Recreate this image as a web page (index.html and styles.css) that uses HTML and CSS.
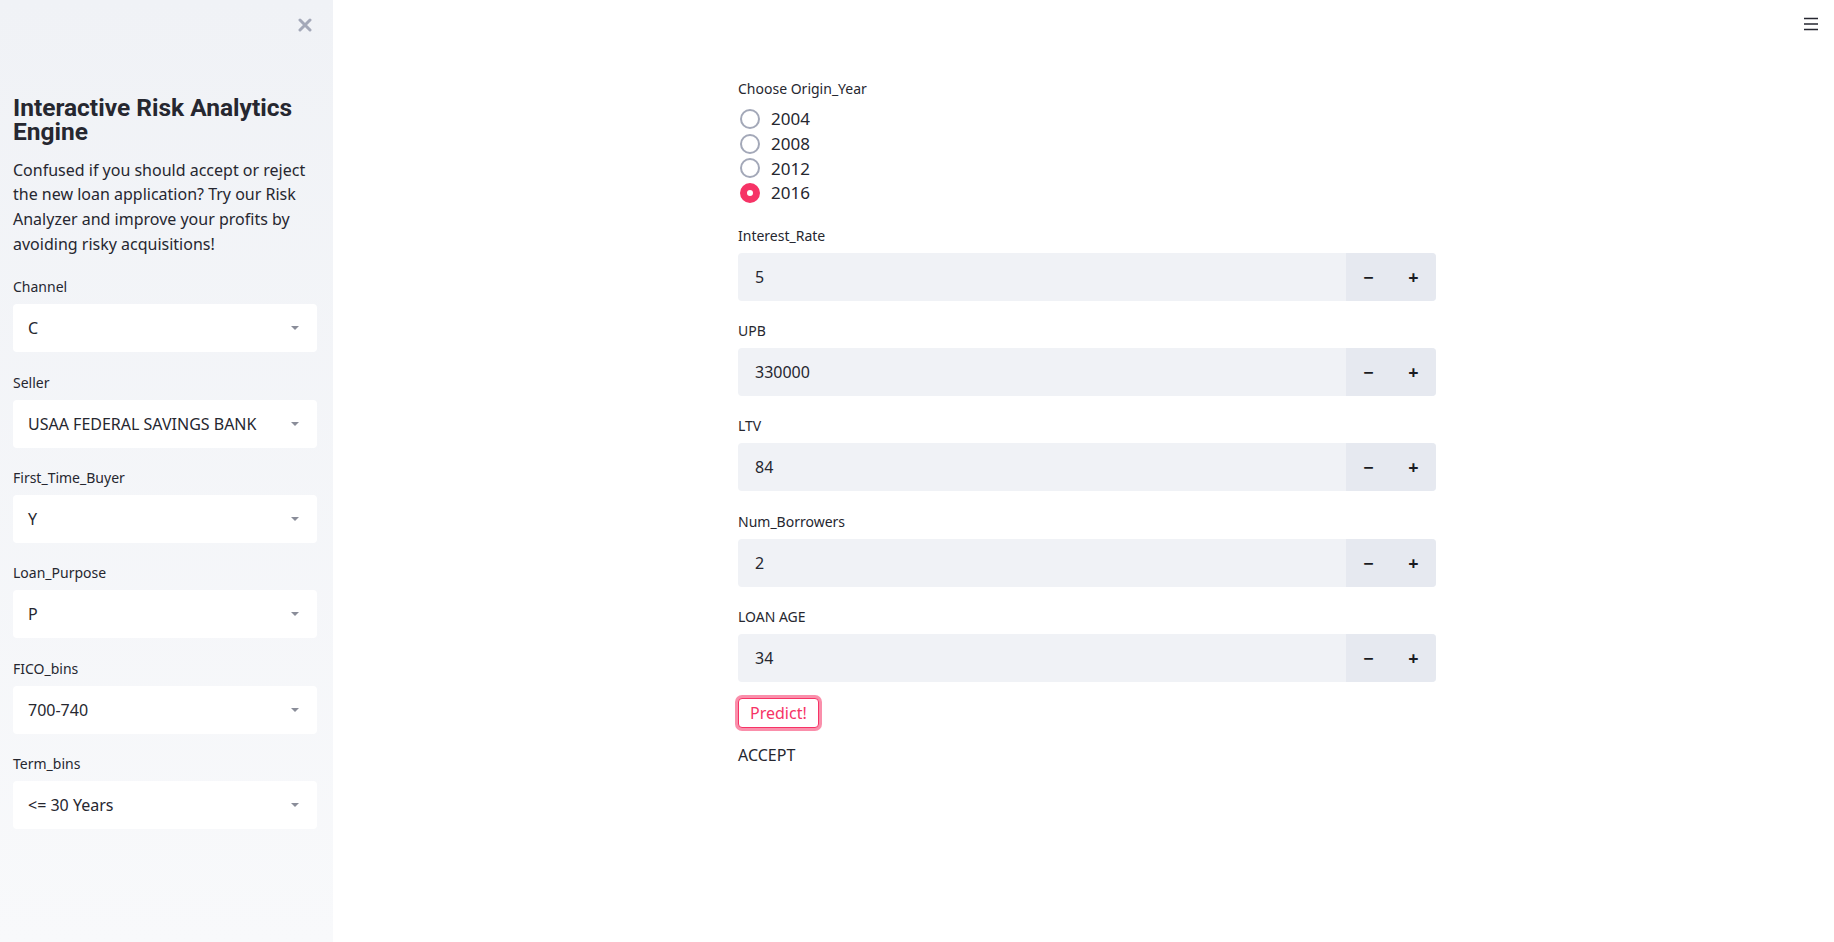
FILE: index.html
```html
<!DOCTYPE html>
<html lang="en">
<head>
<meta charset="utf-8">
<title>Interactive Risk Analytics Engine</title>
<link rel="stylesheet" href="styles.css">
</head>
<body>
<div class="app">
  <aside class="sidebar">
    <button class="close" aria-label="Close sidebar">
      <svg width="14" height="14" viewBox="0 0 14 14"><path d="M2 2 L12 12 M12 2 L2 12" stroke="#a3a8b8" stroke-width="3" stroke-linecap="round"/></svg>
    </button>
    <h2 class="title">Interactive Risk Analytics Engine</h2>
    <p class="intro">Confused if you should accept or reject the new loan application? Try our Risk Analyzer and improve your profits by avoiding risky acquisitions!</p>
    <div class="field">
      <div class="label">Channel</div>
      <div class="select"><span>C</span><span class="caret"></span></div>
    </div>
    <div class="field">
      <div class="label">Seller</div>
      <div class="select"><span>USAA FEDERAL SAVINGS BANK</span><span class="caret"></span></div>
    </div>
    <div class="field">
      <div class="label">First_Time_Buyer</div>
      <div class="select"><span>Y</span><span class="caret"></span></div>
    </div>
    <div class="field">
      <div class="label">Loan_Purpose</div>
      <div class="select"><span>P</span><span class="caret"></span></div>
    </div>
    <div class="field">
      <div class="label">FICO_bins</div>
      <div class="select"><span>700-740</span><span class="caret"></span></div>
    </div>
    <div class="field">
      <div class="label">Term_bins</div>
      <div class="select"><span>&lt;= 30 Years</span><span class="caret"></span></div>
    </div>
  </aside>
  <main class="main">
    <button class="menu" aria-label="Menu">
      <svg width="16" height="14" viewBox="0 0 16 14"><path d="M1 1.5 H15 M1 7 H15 M1 12.5 H15" stroke="#262730" stroke-width="1.5"/></svg>
    </button>
    <div class="content">
      <div class="label">Choose Origin_Year</div>
      <div class="radios">
        <div class="radio"><span class="dot"></span><span>2004</span></div>
        <div class="radio"><span class="dot"></span><span>2008</span></div>
        <div class="radio"><span class="dot"></span><span>2012</span></div>
        <div class="radio"><span class="dot on"></span><span>2016</span></div>
      </div>
      <div class="field">
        <div class="label">Interest_Rate</div>
        <div class="number"><span class="val">5</span><span class="step">&minus;</span><span class="step">+</span></div>
      </div>
      <div class="field">
        <div class="label">UPB</div>
        <div class="number"><span class="val">330000</span><span class="step">&minus;</span><span class="step">+</span></div>
      </div>
      <div class="field">
        <div class="label">LTV</div>
        <div class="number"><span class="val">84</span><span class="step">&minus;</span><span class="step">+</span></div>
      </div>
      <div class="field">
        <div class="label">Num_Borrowers</div>
        <div class="number"><span class="val">2</span><span class="step">&minus;</span><span class="step">+</span></div>
      </div>
      <div class="field">
        <div class="label">LOAN AGE</div>
        <div class="number"><span class="val">34</span><span class="step">&minus;</span><span class="step">+</span></div>
      </div>
      <button class="predict">Predict!</button>
      <div class="result">ACCEPT</div>
    </div>
  </main>
</div>
</body>
</html>
```
FILE: styles.css
```css
* { box-sizing: border-box; }
html, body { margin: 0; padding: 0; }
body {
  font-family: "Noto Sans", "Open Sans", sans-serif;
  color: #262730;
  background: #ffffff;
}
.app {
  display: flex;
  height: 942px;
  overflow: hidden;
}
.sidebar {
  position: relative;
  width: 333px;
  flex: none;
  height: 942px;
  background: linear-gradient(#f0f2f6, #f8f9fb);
  padding: 95.7px 16px 0 13px;
}
.close {
  position: absolute;
  top: 18px;
  left: 298px;
  border: 0;
  background: transparent;
  padding: 0;
  width: 14px;
  height: 14px;
  display: flex;
}
.title {
  margin: 0;
  font-family: Roboto, "Noto Sans", sans-serif;
  font-size: 24.5px;
  line-height: 24.5px;
  font-weight: 700;
}
.intro {
  margin: 13px 0 0;
  font-size: 16px;
  line-height: 24.7px;
}
.label {
  font-size: 14px;
  line-height: 20px;
  height: 20px;
}
.sidebar .field { margin-top: 20.4px; }
.sidebar .field:first-of-type { margin-top: 20.7px; }
.sidebar .label { margin-bottom: 7px; }
.select {
  height: 48px;
  background: #ffffff;
  border-radius: 4px;
  display: flex;
  align-items: center;
  justify-content: space-between;
  padding: 0 18px 0 15px;
  font-size: 16px;
}
.caret {
  width: 0;
  height: 0;
  border-left: 4px solid transparent;
  border-right: 4px solid transparent;
  border-top: 4px solid #8a8d99;
}
.main {
  position: relative;
  flex: 1;
  display: flex;
  justify-content: center;
  padding-left: 7px;
}
.menu {
  position: absolute;
  top: 17px;
  right: 15px;
  border: 0;
  background: transparent;
  padding: 0;
  display: flex;
}
.content {
  width: 698px;
  padding-top: 79px;
}
.content > .label { margin-bottom: 7.7px; }
.radios {
  display: flex;
  flex-direction: column;
}
.radio {
  height: 24.6px;
  display: flex;
  align-items: center;
  gap: 11px;
  padding-left: 2px;
  font-size: 17px;
}
.dot {
  width: 20px;
  height: 20px;
  border-radius: 50%;
  border: 2px solid #a3a8b8;
  background: #fff;
  flex: none;
}
.dot.on {
  border: 7px solid #f63366;
  background: #fff;
}
.content .field { margin-top: 20.7px; }
.content .field + .field { margin-top: 20.3px; }
.content .field .label { margin-bottom: 7px; }
.number {
  height: 48px;
  display: flex;
  border-radius: 4px;
  overflow: hidden;
  background: #f0f2f6;
}
.val {
  flex: 1;
  display: flex;
  align-items: center;
  padding-left: 17px;
  font-size: 16px;
}
.step {
  width: 45px;
  display: flex;
  align-items: center;
  justify-content: center;
  background: #e6e9f0;
  font-size: 18px;
  font-weight: 700;
  color: #1a1b22;
}
.predict {
  margin-top: 16.5px;
  height: 30px;
  padding: 0 11px;
  border: 1px solid #f63366;
  border-radius: 4px;
  background: #fff;
  color: #f63366;
  font-family: inherit;
  font-size: 16px;
  box-shadow: 0 0 0 3px rgba(246, 51, 102, 0.55);
  display: block;
}
.result {
  margin-top: 15px;
  font-size: 16px;
  line-height: 24px;
}
```
